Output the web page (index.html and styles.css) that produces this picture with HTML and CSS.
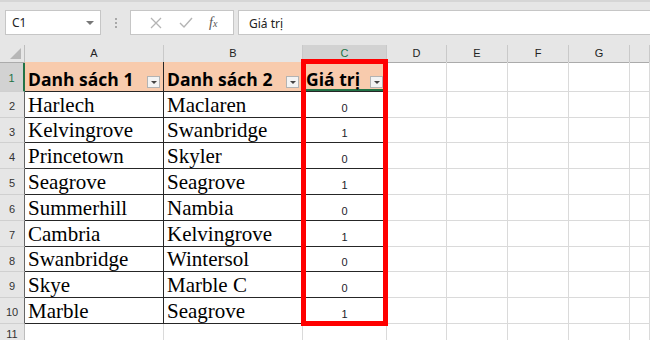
FILE: index.html
```html
<!DOCTYPE html>
<html lang="vi">
<head>
  <meta charset="UTF-8">
  <meta name="viewport" content="width=device-width, initial-scale=1.0">
  <title>Giá trị</title>
  <link rel="stylesheet" href="styles.css">
</head>
<body>
  <div class="toolbar">
    <div class="namebox">
      <span>C1</span>
      <span class="caret"></span>
    </div>
    <div class="dots"><i></i><i></i><i></i></div>
    <div class="fbtns">
      <svg class="ico" width="14" height="14" viewBox="0 0 14 14"><path d="M2 2 L12 12 M12 2 L2 12" stroke="#b4b4b4" stroke-width="1.3" fill="none"/></svg>
      <svg class="ico" width="16" height="14" viewBox="0 0 16 14"><path d="M2 7 L6 11 L14 2" stroke="#b4b4b4" stroke-width="1.4" fill="none"/></svg>
      <span class="fx">f<small>x</small></span>
    </div>
    <div class="formula">Giá trị</div>
  </div>

  <div class="sheet">
    <div class="row head">
      <div class="corner"><span></span></div>
      <div class="ch">A</div>
      <div class="ch">B</div>
      <div class="ch sel">C</div>
      <div class="ch">D</div>
      <div class="ch">E</div>
      <div class="ch">F</div>
      <div class="ch">G</div>
      <div class="ch"></div>
    </div>

    <div class="row r30">
      <div class="rh sel">1</div>
      <div class="c t th">Danh sách 1<span class="filt"></span></div>
      <div class="c t th">Danh sách 2<span class="filt"></span></div>
      <div class="c t th active">Giá trị<span class="filt"></span></div>
      <div class="c"></div><div class="c"></div><div class="c"></div><div class="c"></div><div class="c"></div>
    </div>

    <div class="row r26">
      <div class="rh in">2</div>
      <div class="c t tx">Harlech</div>
      <div class="c t tx">Maclaren</div>
      <div class="c t num">0</div>
      <div class="c"></div><div class="c"></div><div class="c"></div><div class="c"></div><div class="c"></div>
    </div>
    <div class="row r25">
      <div class="rh in">3</div>
      <div class="c t tx">Kelvingrove</div>
      <div class="c t tx">Swanbridge</div>
      <div class="c t num">1</div>
      <div class="c"></div><div class="c"></div><div class="c"></div><div class="c"></div><div class="c"></div>
    </div>
    <div class="row r26">
      <div class="rh in">4</div>
      <div class="c t tx">Princetown</div>
      <div class="c t tx">Skyler</div>
      <div class="c t num">0</div>
      <div class="c"></div><div class="c"></div><div class="c"></div><div class="c"></div><div class="c"></div>
    </div>
    <div class="row r26">
      <div class="rh in">5</div>
      <div class="c t tx">Seagrove</div>
      <div class="c t tx">Seagrove</div>
      <div class="c t num">1</div>
      <div class="c"></div><div class="c"></div><div class="c"></div><div class="c"></div><div class="c"></div>
    </div>
    <div class="row r26">
      <div class="rh in">6</div>
      <div class="c t tx">Summerhill</div>
      <div class="c t tx">Nambia</div>
      <div class="c t num">0</div>
      <div class="c"></div><div class="c"></div><div class="c"></div><div class="c"></div><div class="c"></div>
    </div>
    <div class="row r26">
      <div class="rh in">7</div>
      <div class="c t tx">Cambria</div>
      <div class="c t tx">Kelvingrove</div>
      <div class="c t num">1</div>
      <div class="c"></div><div class="c"></div><div class="c"></div><div class="c"></div><div class="c"></div>
    </div>
    <div class="row r25">
      <div class="rh in">8</div>
      <div class="c t tx">Swanbridge</div>
      <div class="c t tx">Wintersol</div>
      <div class="c t num">0</div>
      <div class="c"></div><div class="c"></div><div class="c"></div><div class="c"></div><div class="c"></div>
    </div>
    <div class="row r26">
      <div class="rh in">9</div>
      <div class="c t tx">Skye</div>
      <div class="c t tx">Marble C</div>
      <div class="c t num">0</div>
      <div class="c"></div><div class="c"></div><div class="c"></div><div class="c"></div><div class="c"></div>
    </div>
    <div class="row r26">
      <div class="rh in">10</div>
      <div class="c t tx">Marble</div>
      <div class="c t tx">Seagrove</div>
      <div class="c t num">1</div>
      <div class="c"></div><div class="c"></div><div class="c"></div><div class="c"></div><div class="c"></div>
    </div>
    <div class="row r16">
      <div class="rh">11</div>
      <div class="c"></div><div class="c"></div><div class="c"></div>
      <div class="c"></div><div class="c"></div><div class="c"></div><div class="c"></div><div class="c"></div>
    </div>

    <div class="highlight"></div>
  </div>
</body>
</html>
```

FILE: styles.css
```css
* {
  box-sizing: border-box;
}
body {
  margin: 0;
  width: 650px;
  height: 340px;
  overflow: hidden;
  background-color: #fff;
  font-family: "Noto Sans", Arial, sans-serif;
}

/* formula bar */
.toolbar {
  height: 45px;
  background-color: #e6e6e6;
  border-top: 2px solid #d6d6d6;
  display: flex;
  align-items: flex-start;
  padding: 8px 0 0 5px;
}
.namebox {
  width: 96px;
  height: 25px;
  background-color: #fff;
  border: 1px solid #c6c6c6;
  display: flex;
  align-items: center;
  justify-content: space-between;
  padding: 0 6px 0 6px;
  font-size: 12px;
  color: #222;
}
.caret {
  width: 0;
  height: 0;
  border-left: 4px solid transparent;
  border-right: 4px solid transparent;
  border-top: 4px solid #777;
}
.dots {
  width: 29px;
  height: 25px;
  display: flex;
  flex-direction: column;
  align-items: center;
  justify-content: center;
  gap: 2px;
}
.dots i {
  width: 2px;
  height: 2px;
  background-color: #a8a8a8;
}
.fbtns {
  width: 104px;
  height: 25px;
  background-color: #fff;
  border: 1px solid #c6c6c6;
  display: flex;
  align-items: center;
  justify-content: space-around;
  padding: 0 8px 0 10px;
}
.fx {
  font-family: "Liberation Serif", serif;
  font-style: italic;
  font-size: 14px;
  color: #555;
}
.fx small {
  font-size: 10px;
}
.formula {
  flex: 1;
  height: 25px;
  margin-left: 4px;
  background-color: #fff;
  border: 1px solid #c6c6c6;
  border-right: none;
  font-size: 12px;
  color: #222;
  padding: 4px 0 0 10px;
}

/* grid */
.sheet {
  position: relative;
}
.row {
  display: grid;
  grid-template-columns: 25px 139px 139px 84px 60px 61px 61px 61px 1fr;
}
.head {
  height: 17px;
}
.r30 {
  height: 30px;
}
.r26 {
  height: 26px;
}
.r25 {
  height: 25px;
}
.r16 {
  height: 16px;
}
.corner {
  background-color: #e6e6e6;
  border-right: 1px solid #bdbdbd;
  border-bottom: 1px solid #ababab;
  position: relative;
}
.corner span {
  position: absolute;
  right: 3px;
  bottom: 3px;
  width: 0;
  height: 0;
  border-left: 11px solid transparent;
  border-bottom: 11px solid #b7b7b7;
}
.ch {
  background-color: #e6e6e6;
  border-right: 1px solid #c9c9c9;
  border-bottom: 1px solid #ababab;
  font-family: "Liberation Sans", Arial, sans-serif;
  font-size: 11px;
  color: #222;
  text-align: center;
  line-height: 16px;
}
.ch.sel {
  background-color: #d2d2d2;
  color: #217346;
  border-bottom: 2px solid #217346;
}
.rh {
  background-color: #e6e6e6;
  border-right: 1px solid #bdbdbd;
  border-bottom: 1px solid #d0d0d0;
  font-family: "Liberation Sans", Arial, sans-serif;
  font-size: 11px;
  color: #333;
  display: flex;
  align-items: center;
  justify-content: center;
  padding-top: 3px;
}
.r16 .rh {
  padding-top: 4px;
}
.rh.in {
  border-right-color: #666;
}
.rh.sel {
  background-color: #d2d2d2;
  color: #217346;
  border-right: 2px solid #217346;
}
.c {
  border-right: 1px solid #dadada;
  border-bottom: 1px solid #dadada;
}
.c.t {
  border-right-color: #262626;
  border-bottom-color: #262626;
}
.th {
  background-color: #f8cbad;
  font-family: "Open Sans", "Liberation Sans", sans-serif;
  font-weight: bold;
  font-size: 17.5px;
  line-height: 1;
  color: #000;
  display: flex;
  align-items: flex-end;
  justify-content: space-between;
  padding: 0 3px 3px 3px;
}
.th.active {
  box-shadow: inset 0 -2px 0 #217346;
}
.filt {
  width: 13px;
  height: 12px;
  background-color: #f3f3f3;
  border: 1px solid #b3b3b3;
  position: relative;
  flex-shrink: 0;
}
.filt::after {
  content: "";
  position: absolute;
  left: 3px;
  top: 4px;
  border-left: 3px solid transparent;
  border-right: 3px solid transparent;
  border-top: 3px solid #444;
}
.tx {
  font-family: "Liberation Serif", "Times New Roman", serif;
  font-size: 21px;
  line-height: 1;
  color: #000;
  display: flex;
  align-items: flex-end;
  padding: 0 0 1px 3px;
}
.num {
  font-family: "Liberation Sans", Arial, sans-serif;
  font-size: 11px;
  color: #1c1c2a;
  display: flex;
  align-items: flex-end;
  justify-content: center;
  padding-bottom: 3px;
}

/* red frame drawn over column C */
.highlight {
  position: absolute;
  left: 301px;
  top: 14px;
  width: 87px;
  height: 267px;
  border: 5px solid #ff0000;
}
```
